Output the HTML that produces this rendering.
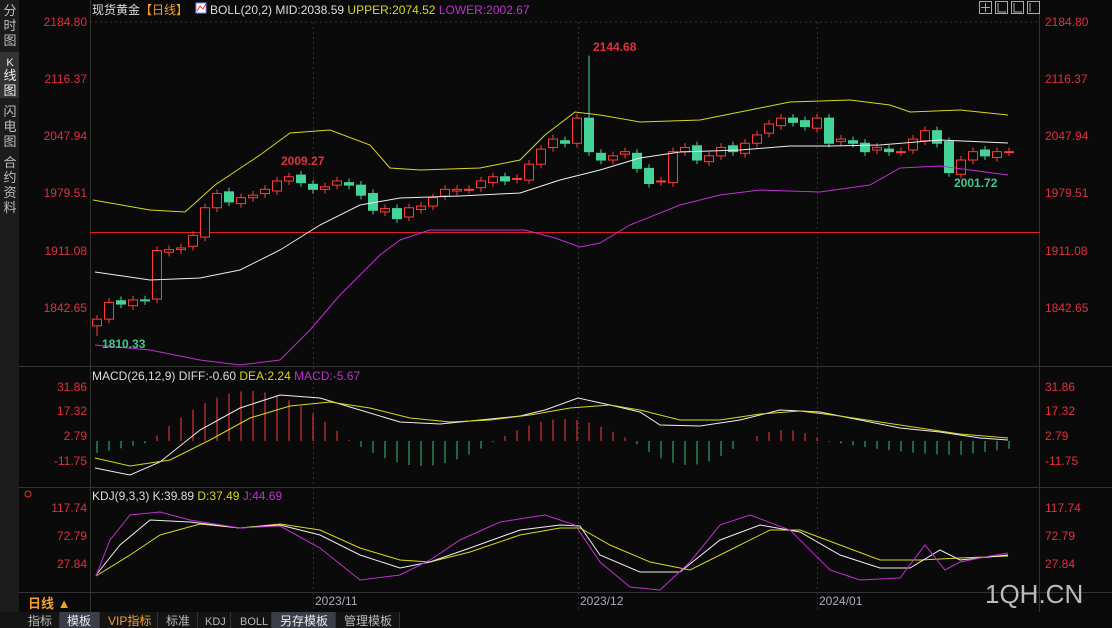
<!DOCTYPE html>
<html><head><meta charset="utf-8"><style>
body{margin:0;background:#0a0a0a;width:1112px;height:628px;overflow:hidden;font-family:"Liberation Sans","Noto Sans CJK SC",sans-serif}
svg{position:absolute;left:0;top:0}
</style></head><body>
<svg id="s" width="1112" height="628" xmlns="http://www.w3.org/2000/svg" font-family="Liberation Sans, Noto Sans CJK SC, sans-serif">
<rect width="1112" height="628" fill="#0a0a0a"/>
<!-- sidebar -->
<rect x="0" y="0" width="19" height="612" fill="#1c1c1c"/>
<rect x="0" y="52" width="19" height="46" fill="#333"/>
<g fill="#bbb" font-size="13" text-anchor="middle">
<text x="10" y="15">分</text><text x="10" y="30">时</text><text x="10" y="45">图</text>
<text x="10" y="66" fill="#eee" font-size="11">K</text><text x="10" y="80" fill="#eee">线</text><text x="10" y="95" fill="#eee">图</text>
<text x="10" y="116">闪</text><text x="10" y="131">电</text><text x="10" y="146">图</text>
<text x="10" y="167">合</text><text x="10" y="182">约</text><text x="10" y="197">资</text><text x="10" y="212">料</text>
</g>
<!-- frame lines -->
<g stroke="#333" stroke-width="1">
<line x1="90.5" y1="0" x2="90.5" y2="612"/>
<line x1="1039.5" y1="0" x2="1039.5" y2="612"/>
<line x1="19" y1="366.5" x2="1112" y2="366.5"/>
<line x1="19" y1="487.5" x2="1112" y2="487.5"/>
<line x1="19" y1="592.5" x2="1112" y2="592.5"/>
</g>
<g stroke="#333" stroke-dasharray="2,3">
<line x1="90" y1="22" x2="1040" y2="22"/>
<line x1="313.5" y1="22" x2="313.5" y2="612"/>
<line x1="578.5" y1="22" x2="578.5" y2="612"/>
<line x1="817.5" y1="22" x2="817.5" y2="612"/>
</g>
<!-- header -->
<text x="92" y="14" font-size="12" fill="#ddd">现货黄金<tspan fill="#f0a030">【日线】</tspan></text>
<rect x="196" y="3" width="10" height="10" fill="#fff" stroke="#88f"/><path d="M197 11 L200 6 L203 9 L206 4" stroke="#e33" fill="none"/>
<text x="210" y="14" font-size="12" fill="#ddd">BOLL(20,2) MID:2038.59 <tspan fill="#d8d820">UPPER:2074.52</tspan> <tspan fill="#c030d0">LOWER:2002.67</tspan></text>
<g stroke="#aaa" fill="none"><rect x="979.5" y="1.5" width="12" height="12"/><rect x="995.5" y="1.5" width="12" height="12"/><rect x="1011.5" y="1.5" width="12" height="12"/><rect x="1027.5" y="1.5" width="12" height="12"/>
<path d="M985.5 3v9M981 7.5h9M998 3v9h8M1014 3v9h8M1030 3v9"/></g>
<!-- axis labels -->
<g font-size="12" fill="#e03040" text-anchor="end">
<text x="87" y="26">2184.80</text><text x="87" y="83">2116.37</text><text x="87" y="140">2047.94</text><text x="87" y="197">1979.51</text><text x="87" y="255">1911.08</text><text x="87" y="312">1842.65</text>
<text x="87" y="391">31.86</text><text x="87" y="415">17.32</text><text x="87" y="440">2.79</text><text x="87" y="465">-11.75</text>
<text x="87" y="512">117.74</text><text x="87" y="540">72.79</text><text x="87" y="568">27.84</text>
</g>
<g font-size="12" fill="#e03040">
<text x="1045" y="26">2184.80</text><text x="1045" y="83">2116.37</text><text x="1045" y="140">2047.94</text><text x="1045" y="197">1979.51</text><text x="1045" y="255">1911.08</text><text x="1045" y="312">1842.65</text>
<text x="1045" y="391">31.86</text><text x="1045" y="415">17.32</text><text x="1045" y="440">2.79</text><text x="1045" y="465">-11.75</text>
<text x="1045" y="512">117.74</text><text x="1045" y="540">72.79</text><text x="1045" y="568">27.84</text>
</g>
<line x1="90" y1="232.5" x2="1040" y2="232.5" stroke="#e02020"/>
<g id="c"></g>
<g fill="none" stroke-width="1">
<polyline stroke="#d8d820" points="93,200 150,210 185,212 215,185 260,155 290,133 330,130 370,145 390,168 420,170 480,168 520,160 545,135 575,112 600,115 640,122 700,120 760,108 790,102 850,100 890,105 910,112 960,110 1008,115"/>
<polyline stroke="#eee" points="95,272 150,280 200,278 240,270 280,250 320,225 360,205 400,198 460,196 520,193 560,180 600,170 640,158 680,152 740,150 790,146 830,146 880,145 940,140 1008,143"/>
<polyline stroke="#c030d0" points="95,345 150,350 200,360 240,365 280,360 310,330 340,295 380,255 400,240 430,230 525,230 555,238 580,247 600,243 630,225 680,205 720,195 760,190 820,192 870,185 900,168 940,166 1008,175"/>
</g>
<g font-size="12" font-weight="bold">
<text x="593" y="51" fill="#e03040">2144.68</text><text x="281" y="165" fill="#e03040">2009.27</text>
<text x="954" y="187" fill="#40c890">2001.72</text><text x="102" y="348" fill="#40c890">1810.33</text>
</g>
<!-- MACD -->
<text x="92" y="380" font-size="12" fill="#ddd">MACD(26,12,9) DIFF:-0.60 <tspan fill="#d8d820">DEA:2.24</tspan> <tspan fill="#c030d0">MACD:-5.67</tspan></text>
<g id="m"></g>
<polyline fill="none" stroke="#eee" points="95,468 130,475 160,462 200,430 240,408 280,395 320,398 360,410 400,422 440,424 480,420 520,416 545,410 578,398 610,405 640,412 660,425 700,426 740,420 780,410 820,412 860,420 900,428 940,432 980,438 1008,440"/>
<polyline fill="none" stroke="#d8d820" points="95,458 130,466 170,460 210,440 250,418 290,406 330,402 370,408 410,418 450,422 490,420 530,415 570,408 610,405 640,410 680,420 720,420 760,414 800,411 840,416 880,422 920,428 960,434 1008,438"/>
<!-- KDJ -->
<circle cx="28" cy="494" r="3" fill="none" stroke="#e33"/>
<text x="92" y="500" font-size="12" fill="#ddd">KDJ(9,3,3) K:39.89 <tspan fill="#d8d820">D:37.49</tspan> <tspan fill="#c030d0">J:44.69</tspan></text>
<polyline fill="none" stroke="#d8d820" points="96,576 130,555 160,535 200,524 240,528 280,524 320,530 360,548 400,560 430,562 470,552 520,535 560,528 580,528 610,545 650,562 690,570 730,550 770,530 800,530 840,545 880,560 920,560 960,558 1008,556"/>
<polyline fill="none" stroke="#eee" points="96,575 120,545 150,520 190,522 240,528 280,525 320,535 360,555 400,568 430,562 470,548 520,530 560,525 580,526 600,555 640,572 680,572 720,540 760,525 800,532 840,555 880,568 910,568 940,550 960,560 1008,555"/>
<polyline fill="none" stroke="#c030d0" points="96,576 110,540 130,515 160,512 190,520 240,528 280,526 320,548 360,580 400,575 430,560 460,540 500,522 545,515 575,525 600,562 630,587 660,590 690,562 720,525 750,515 790,530 830,570 860,580 900,578 925,545 945,570 960,562 990,556 1008,553"/>
<!-- date axis -->
<text x="28" y="608" font-size="13" font-weight="bold" fill="#f0a030">日线 ▲</text>
<line x1="90.5" y1="592" x2="90.5" y2="612" stroke="#333"/>
<g font-size="12" fill="#aab"><text x="315" y="605">2023/11</text><text x="580" y="605">2023/12</text><text x="819" y="605">2024/01</text></g>
<text x="985" y="603" font-size="26" fill="#bbb">1QH.CN</text>
<!-- bottom tabs -->
<rect x="0" y="612" width="1112" height="16" fill="#0a0a0a"/>
<rect x="0" y="612" width="400" height="16" fill="#141414"/>
<rect x="60" y="612" width="39" height="16" fill="#3a3e48"/>
<rect x="272" y="612" width="63" height="16" fill="#3a3e48"/>
<g font-size="12" fill="#bbb">
<text x="28" y="625">指标</text><text x="67" y="625" fill="#eee">模板</text><text x="108" y="625" fill="#f0a030">VIP指标</text><text x="166" y="625">标准</text><text x="205" y="625" font-size="11">KDJ</text><text x="240" y="625" font-size="11">BOLL</text><text x="280" y="625" fill="#eee">另存模板</text><text x="344" y="625">管理模板</text>
</g>
<g stroke="#333"><line x1="59.5" y1="612" x2="59.5" y2="628"/><line x1="99.5" y1="612" x2="99.5" y2="628"/><line x1="157.5" y1="612" x2="157.5" y2="628"/><line x1="197.5" y1="612" x2="197.5" y2="628"/><line x1="230.5" y1="612" x2="230.5" y2="628"/><line x1="271.5" y1="612" x2="271.5" y2="628"/><line x1="335.5" y1="612" x2="335.5" y2="628"/><line x1="399.5" y1="612" x2="399.5" y2="628"/></g>
</svg>
<script>
var closes=[1830,1850,1848,1853,1852,1912,1913,1915,1930,1963,1980,1970,1975,1978,1985,1995,2000,1993,1985,1988,1995,1990,1978,1960,1962,1950,1963,1965,1975,1985,1985,1985,1995,2000,1995,1998,2015,2033,2045,2040,2070,2030,2020,2025,2030,2010,1992,1995,2030,2035,2020,2025,2035,2030,2040,2050,2063,2070,2065,2060,2070,2040,2045,2040,2030,2035,2030,2030,2045,2055,2040,2005,2020,2030,2025,2030,2030];
function Y(p){return 22+(2184.8-p)*0.8375}
var NS="http://www.w3.org/2000/svg",g=document.getElementById('c'),h='';
var open=1820;
for(var i=0;i<closes.length;i++){
 var x=97+i*12,c=closes[i],o=(i==0?1822:closes[i-1]+(i%3-1)*2);
 if(i==41)o=2070; if(i==40)o=2040;
 var up=c>=o,col=up?'#ff3c3c':'#44d49a';
 var hi=Math.max(o,c)+5,lo=Math.min(o,c)-5;
 if(i==41)hi=2144.68; if(i==0)lo=1810;
 var y1=Y(Math.max(o,c)),y2=Y(Math.min(o,c));if(y2-y1<1)y2=y1+1;
 h+='<line x1="'+x+'" x2="'+x+'" y1="'+Y(hi)+'" y2="'+Y(lo)+'" stroke="'+col+'"/>';
 h+='<rect x="'+(x-4.5)+'" y="'+y1+'" width="9" height="'+(y2-y1)+'" fill="'+(up?'#0a0a0a':col)+'" stroke="'+col+'"/>';
}
g.innerHTML=h;
// MACD hist
var m='',z=441;
for(var i=0;i<77;i++){
 var x=97+i*12,v;
 if(x<150)v=-12+ (x-97)/5;
 else if(x<350)v=50*Math.sin((x-150)/200*Math.PI);
 else if(x<495)v=-25*Math.sin((x-350)/145*Math.PI);
 else if(x<632)v=22*Math.sin((x-495)/137*Math.PI);
 else if(x<745)v=-24*Math.sin((x-632)/113*Math.PI);
 else if(x<825)v=11*Math.sin((x-745)/80*Math.PI);
 else v=-14*Math.sin(Math.min(1,(x-825)/140)*Math.PI/2)+(x>960?(x-960)/8:0);
 var col=v>=0?'#ff3c3c':'#30c070';
 m+='<line x1="'+x+'" x2="'+x+'" y1="'+z+'" y2="'+(z-v)+'" stroke="'+col+'"/>';
}
document.getElementById('m').innerHTML=m;
</script>
</body></html>
